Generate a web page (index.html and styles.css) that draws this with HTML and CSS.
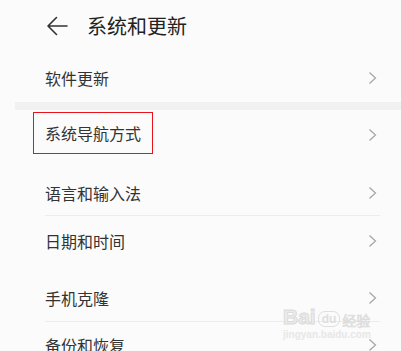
FILE: index.html
```html
<!DOCTYPE html>
<html lang="zh-CN">
<head>
<meta charset="utf-8">
<title>系统和更新</title>
<link rel="stylesheet" href="styles.css">
</head>
<body>
<div class="page">
  <header class="header">
    <svg class="back" width="22" height="20" viewBox="0 0 22 20">
      <path d="M10.5 1.5 L2 10 L10.5 18.5 M2 10 H21" fill="none" stroke="#333" stroke-width="1.6" stroke-linecap="round" stroke-linejoin="round"/>
    </svg>
    <h1 class="title">系统和更新</h1>
  </header>

  <div class="row row-a"><span class="label">软件更新</span><svg class="chev" width="9" height="14" viewBox="0 0 9 14"><path d="M1.5 1.5 L7.5 7 L1.5 12.5" fill="none" stroke="#a8a8a8" stroke-width="1.3"/></svg></div>
  <div class="band"></div>
  <div class="row row-b"><span class="label boxed">系统导航方式</span><svg class="chev" width="9" height="14" viewBox="0 0 9 14"><path d="M1.5 1.5 L7.5 7 L1.5 12.5" fill="none" stroke="#a8a8a8" stroke-width="1.3"/></svg></div>
  <div class="gap"></div>
  <div class="row row-c"><span class="label">语言和输入法</span><svg class="chev" width="9" height="14" viewBox="0 0 9 14"><path d="M1.5 1.5 L7.5 7 L1.5 12.5" fill="none" stroke="#a8a8a8" stroke-width="1.3"/></svg></div>
  <div class="line"></div>
  <div class="row row-d"><span class="label">日期和时间</span><svg class="chev" width="9" height="14" viewBox="0 0 9 14"><path d="M1.5 1.5 L7.5 7 L1.5 12.5" fill="none" stroke="#a8a8a8" stroke-width="1.3"/></svg></div>
  <div class="gap faint"></div>
  <div class="row row-e"><span class="label">手机克隆</span><svg class="chev" width="9" height="14" viewBox="0 0 9 14"><path d="M1.5 1.5 L7.5 7 L1.5 12.5" fill="none" stroke="#a8a8a8" stroke-width="1.3"/></svg></div>
  <div class="line"></div>
  <div class="row row-f"><span class="label">备份和恢复</span><svg class="chev" width="9" height="14" viewBox="0 0 9 14"><path d="M1.5 1.5 L7.5 7 L1.5 12.5" fill="none" stroke="#a8a8a8" stroke-width="1.3"/></svg></div>

  <div class="watermark">
    <div class="wm-top"><span class="wm-bai">Bai</span><span class="wm-du">du</span><span class="wm-jy">经验</span></div>
    <div class="wm-url">jingyan.baidu.com</div>
  </div>
</div>
</body>
</html>
```

FILE: styles.css
```css
html, body {
  margin: 0;
  padding: 0;
}
body {
  background: #fbfbfb;
  font-family: "Noto Sans CJK SC", "Noto Sans", sans-serif;
  color: #333;
  overflow: hidden;
}
.page {
  position: relative;
  width: 401px;
  height: 351px;
  overflow: hidden;
  display: flex;
  flex-direction: column;
}
.header {
  height: 54px;
  flex: none;
  display: flex;
  align-items: center;
  padding-left: 46px;
  gap: 19px;
  box-sizing: border-box;
  padding-bottom: 2px;
}
.back {
  flex: none;
}
.title {
  margin: 0;
  font-size: 20px;
  font-weight: 400;
  color: #222;
  line-height: 1;
}
.row {
  flex: none;
  display: flex;
  align-items: center;
  justify-content: space-between;
  padding-left: 45px;
  padding-right: 24px;
}
.label {
  font-size: 16px;
  line-height: 1;
  color: #333;
}
.chev {
  flex: none;
}
.row-a { height: 48px; }
.band {
  flex: none;
  height: 8px;
  margin-left: 15px;
  background: #f1f1f1;
}
.row-b { height: 50px; }
.boxed {
  margin-left: -12px;
  padding: 0 11px;
  height: 40px;
  line-height: 40px;
  border: 1px solid #e8141b;
  margin-top: -4px;
}
.gap {
  flex: none;
  height: 10px;
}
.row-c { height: 45px; }
.line {
  flex: none;
  height: 1px;
  margin-left: 45px;
  margin-right: 21px;
  background: #ececec;
}
.row-d { height: 50px; }
.gap.faint { height: 8px; }
.row-e { height: 47px; }
.row-f { height: 46px; }

.watermark {
  position: absolute;
  left: 283px;
  top: 306px;
  color: #e2e2e2;
  font-family: "Liberation Sans", sans-serif;
  opacity: 0.9;
}
.wm-top {
  display: flex;
  align-items: flex-end;
  gap: 2px;
}
.wm-bai {
  font-size: 21px;
  font-weight: 700;
  line-height: 1;
  color: #ececec;
  -webkit-text-stroke: 1px #d8d8d8;
}
.wm-du {
  font-size: 12px;
  font-weight: 700;
  line-height: 14px;
  padding: 0 3px;
  border-radius: 7px;
  border: 1px solid #dcdcdc;
  color: #dcdcdc;
}
.wm-jy {
  font-family: "Noto Sans CJK SC", sans-serif;
  font-size: 14px;
  line-height: 1;
  color: #ebebeb;
  -webkit-text-stroke: 0.6px #d6d6d6;
}
.wm-url {
  font-size: 10px;
  line-height: 12px;
  color: #e6e6e6;
  font-weight: 700;
  margin-top: 2px;
}
```
